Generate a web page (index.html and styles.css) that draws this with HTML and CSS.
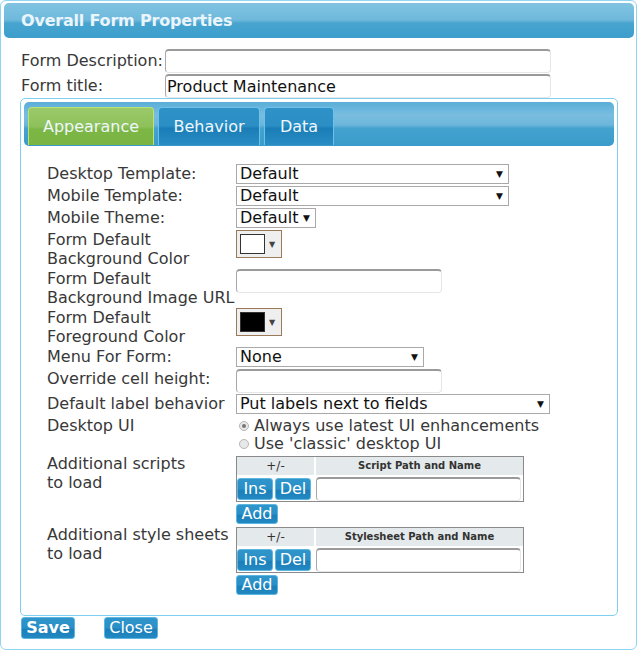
FILE: index.html
```html
<!DOCTYPE html>
<html lang="en">
<head>
  <meta charset="UTF-8" />
  <title>Overall Form Properties</title>
  <link rel="stylesheet" href="styles.css">
</head>
<body>
  <div class="dialog">
    <div class="dialog-header">Overall Form Properties</div>

    <div class="dialog-body">
      <div class="top-row">
        <label class="top-label">Form Description:</label>
        <input type="text" class="text-input top-input" />
      </div>
      <div class="top-row">
        <label class="top-label">Form title:</label>
        <input type="text" class="text-input top-input" value="Product Maintenance" />
      </div>

      <div class="tabs">
        <div class="tab-bar">
          <div class="tab active">Appearance</div>
          <div class="tab behavior">Behavior</div>
          <div class="tab data">Data</div>
        </div>

        <div class="tab-content">
          <div class="prop-grid">
            <label>Desktop Template:</label>
            <div class="select w-wide"><select><option>Default</option></select></div>

            <label>Mobile Template:</label>
            <div class="select w-wide"><select><option>Default</option></select></div>

            <label>Mobile Theme:</label>
            <div class="select w-small"><select><option>Default</option></select></div>

            <label>Form Default<br>Background Color</label>
            <div><div class="color-pick"><span class="swatch"></span><span class="pick-arrow">▼</span></div></div>

            <label>Form Default<br>Background Image URL</label>
            <div><input type="text" class="text-input w-text" /></div>

            <label>Form Default<br>Foreground Color</label>
            <div><div class="color-pick"><span class="swatch black"></span><span class="pick-arrow">▼</span></div></div>

            <label>Menu For Form:</label>
            <div class="select w-mid"><select><option>None</option></select></div>

            <label>Override cell height:</label>
            <div><input type="text" class="text-input w-text" /></div>

            <label>Default label behavior</label>
            <div class="select w-label"><select><option>Put labels next to fields</option></select></div>

            <label>Desktop UI</label>
            <div class="radios">
              <label class="radio"><span class="dot checked"></span>Always use latest UI enhancements</label>
              <label class="radio"><span class="dot"></span>Use 'classic' desktop UI</label>
            </div>

            <label>Additional scripts<br>to load</label>
            <div>
              <div class="grid-table">
                <div class="th small">+/-</div>
                <div class="th">Script Path and Name</div>
                <div class="row-btns"><button class="btn">Ins</button><button class="btn">Del</button></div>
                <input type="text" class="text-input cell-input" />
              </div>
              <button class="btn add">Add</button>
            </div>

            <label>Additional style sheets<br>to load</label>
            <div>
              <div class="grid-table">
                <div class="th small">+/-</div>
                <div class="th">Stylesheet Path and Name</div>
                <div class="row-btns"><button class="btn">Ins</button><button class="btn">Del</button></div>
                <input type="text" class="text-input cell-input" />
              </div>
              <button class="btn add">Add</button>
            </div>
          </div>
        </div>
      </div>

      <div class="footer">
        <button class="btn save">Save</button>
        <button class="btn close">Close</button>
      </div>
    </div>
  </div>
</body>
</html>
```

FILE: styles.css
```css
body {
  margin: 0;
  background: #fff;
  font-family: "DejaVu Sans", Verdana, sans-serif;
  font-size: 16px;
  color: #383838;
}
.dialog {
  width: 637px;
  height: 650px;
  box-sizing: border-box;
  border: 1px solid #8ed5f2;
  border-radius: 6px;
  padding: 2px 2px 0 3px;
}
.dialog-header {
  height: 35px;
  border-radius: 5px;
  background: linear-gradient(#80c3e1 0%, #6fb9dc 48%, #47a4cf 58%, #3d9ecc 100%);
  color: #eaf5fb;
  font-weight: bold;
  font-size: 16px;
  letter-spacing: -0.2px;
  line-height: 35px;
  padding-left: 17px;
}
.dialog-body {
  padding: 10px 0 0 16px;
}
.top-row {
  display: flex;
  align-items: center;
  height: 25px;
}
.top-label {
  width: 144px;
  padding-left: 1px;
}
.text-input {
  box-sizing: border-box;
  height: 24px;
  border: 1px solid #e6e6e6;
  border-top: 2px solid #9a9a9a;
  border-left: 1px solid #a8a8a8;
  border-radius: 4px;
  font-family: inherit;
  font-size: 16px;
  color: #111;
  padding: 0 1px;
  background: #fff;
}
.top-input {
  width: 386px;
}
.tabs {
  width: 598px;
  box-sizing: border-box;
  border: 1px solid #7fd0f0;
  border-radius: 5px;
  padding: 3px;
}
.tab-bar {
  display: flex;
  gap: 4px;
  height: 44px;
  box-sizing: border-box;
  padding: 5px 4px 0;
  border-radius: 5px;
  background: linear-gradient(#5aaed8 0%, #79bde0 30%, #6cb6db 52%, #44a2ce 60%, #3a9bca 100%);
}
.tab {
  height: 38px;
  box-sizing: border-box;
  border: 1px solid #6cc2ea;
  border-bottom: none;
  border-radius: 4px 4px 0 0;
  background: linear-gradient(#2e92c7 0%, #2b8fc5 48%, #1a7db7 55%, #2a8cc3 100%);
  color: #eef7fc;
  font-size: 16px;
  line-height: 38px;
  text-align: center;
}
.tab.active {
  width: 126px;
  border-color: #b8e27a;
  background: linear-gradient(#9bc96a 0%, #8dc15a 50%, #7cb644 58%, #7ab443 100%);
}
.tab.behavior { width: 102px; }
.tab.data { width: 70px; }
.tab-content {
  padding: 18px 0 17px 23px;
}
.prop-grid {
  display: grid;
  grid-template-columns: 189px auto;
  row-gap: 1px;
  line-height: 19px;
  align-items: start;
}
.select {
  position: relative;
  height: 21px;
}
.select select {
  appearance: none;
  width: 100%;
  height: 20px;
  box-sizing: border-box;
  border: 1px solid #a9a9a9;
  background: #fff;
  font-family: inherit;
  font-size: 16px;
  line-height: 18px;
  color: #111;
  padding: 0 0 0 3px;
  border-radius: 0;
}
.select::after {
  content: "▼";
  position: absolute;
  right: 6px;
  top: 3px;
  font-size: 9px;
  line-height: 14px;
  color: #111;
  pointer-events: none;
}
.w-wide { width: 273px; }
.w-small { width: 80px; }
.w-mid { width: 188px; }
.w-label { width: 314px; }
.w-text { width: 206px; }
.color-pick {
  width: 46px;
  height: 28px;
  box-sizing: border-box;
  border: 1px solid #9b7a5a;
  background: #efefef;
  display: flex;
  align-items: center;
  padding-left: 3px;
  gap: 4px;
}
.swatch {
  width: 25px;
  height: 20px;
  box-sizing: border-box;
  border: 1px solid #333;
  background: #fff;
}
.swatch.black {
  background: #000;
}
.pick-arrow {
  font-size: 8px;
  color: #444;
}
.radios {
  display: flex;
  flex-direction: column;
  padding-top: 1px;
}
.radio {
  display: flex;
  align-items: center;
  gap: 5px;
  line-height: 18px;
  color: #383838;
  padding-left: 3px;
}
.dot {
  width: 10px;
  height: 10px;
  border-radius: 50%;
  border: 1px solid #b5b5b5;
  background: #e8e8e8;
  box-sizing: border-box;
  position: relative;
}
.dot.checked::after {
  content: "";
  position: absolute;
  left: 2px;
  top: 2px;
  width: 4px;
  height: 4px;
  border-radius: 50%;
  background: #777;
}
.grid-table {
  width: 288px;
  box-sizing: border-box;
  border: 1px solid #8a8a8a;
  display: grid;
  grid-template-columns: 77px auto;
  column-gap: 2px;
  row-gap: 2px;
  margin-top: 2px;
}
.th {
  height: 18px;
  background: #e4eaeb;
  text-align: center;
  font-size: 10px;
  font-weight: bold;
  line-height: 18px;
  color: #333;
}
.th.small {
  font-weight: normal;
  font-size: 12px;
}
.row-btns {
  display: flex;
  gap: 2px;
  padding-top: 1px;
}
.cell-input {
  width: 205px;
}
.btn {
  height: 22px;
  box-sizing: border-box;
  border: 1px solid #5db6e0;
  border-radius: 3px;
  background: linear-gradient(#2f95cb 0%, #2a8fc6 50%, #1b7fb9 58%, #2389c2 100%);
  color: #fff;
  font-family: inherit;
  font-size: 16px;
  line-height: 20px;
  padding: 0;
  cursor: pointer;
}
.row-btns .btn {
  width: 36px;
}
.btn.add {
  display: block;
  width: 42px;
  height: 20px;
  margin-top: 2px;
  line-height: 18px;
}
.footer {
  display: flex;
  gap: 29px;
  margin-top: 1px;
  padding-left: 1px;
}
.btn.save {
  width: 54px;
  font-weight: bold;
}
.btn.close {
  width: 54px;
}
```
